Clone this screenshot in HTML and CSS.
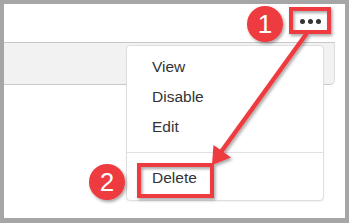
FILE: index.html
```html
<!DOCTYPE html>
<html>
<head>
<meta charset="utf-8">
<link rel="stylesheet" href="styles.css">
</head>
<body>
<div class="frame">
  <div class="canvas">
    <div class="topbar">
      <div class="dots"><span></span><span></span><span></span></div>
    </div>
    <div class="band"></div>
    <div class="menu">
      <div class="item">View</div>
      <div class="item">Disable</div>
      <div class="item">Edit</div>
      <div class="divider"></div>
      <div class="item">Delete</div>
    </div>
    <svg class="annot" width="349" height="223" viewBox="0 0 349 223">
      <defs>
        <filter id="sh" x="-20%" y="-20%" width="140%" height="140%">
          <feDropShadow dx="1.5" dy="2" stdDeviation="1.5" flood-color="#000" flood-opacity="0.35"/>
        </filter>
      </defs>
      <g filter="url(#sh)">
        <rect x="291" y="9" width="38" height="23" fill="none" stroke="#ee3a3f" stroke-width="4"/>
        <rect x="139" y="165" width="73" height="31" fill="none" stroke="#ee3a3f" stroke-width="4"/>
        <line x1="307" y1="33" x2="221" y2="152" stroke="#ee3a3f" stroke-width="4.5"/>
        <polygon points="212,165 213.5,145 231,157.5" fill="#ee3a3f"/>
        <circle cx="265" cy="24" r="18" fill="#ee3a3f"/>
        <circle cx="107" cy="182" r="18" fill="#ee3a3f"/>
      </g>
    </svg>
    <div class="num n1">1</div>
    <div class="num n2">2</div>
  </div>
</div>
</body>
</html>
```
FILE: styles.css
```css
html, body {
  margin: 0;
  padding: 0;
}
body {
  width: 349px;
  height: 223px;
  overflow: hidden;
  font-family: "Liberation Sans", Arial, sans-serif;
}
.frame {
  background: #a6a6a6;
  padding: 4px 4px 5px 4px;
  width: 349px;
  height: 223px;
  box-sizing: border-box;
}
.canvas {
  position: relative;
  background: #fff;
  height: 214px;
}
.topbar {
  height: 38px;
  width: 331px;
  display: flex;
  justify-content: flex-end;
  align-items: center;
  box-sizing: border-box;
  padding-right: 14px;
}
.dots {
  display: flex;
  gap: 3px;
  margin-top: -4px;
}
.dots span {
  width: 5px;
  height: 5px;
  border-radius: 50%;
  background: #333;
}
.band {
  width: 331px;
  background: #f2f2f2;
  border-top: 1px solid #c8c8c8;
  border-bottom: 1px solid #c8c8c8;
  border-right: 1px solid #dcdcdc;
  border-bottom-right-radius: 5px;
  box-sizing: border-box;
  height: 43px;
}
.menu {
  position: absolute;
  left: 122px;
  top: 41px;
  width: 198px;
  height: 156px;
  box-sizing: border-box;
  background: #fff;
  border: 1px solid #dedede;
  border-radius: 4px;
  padding: 6px 0 6px 0;
  box-shadow: 0 1px 2px rgba(0,0,0,0.05);
}
.item {
  font-size: 15.5px;
  line-height: 30px;
  color: #333;
  padding-left: 25px;
}
.divider {
  height: 1px;
  background: #e2e2e2;
  margin: 10px 0 10px 0;
}
.annot {
  position: absolute;
  left: -4px;
  top: -4px;
}
.num {
  position: absolute;
  width: 36px;
  height: 36px;
  line-height: 36px;
  text-align: center;
  color: #fff;
  font-size: 26px;
  font-family: "Liberation Sans", Arial, sans-serif;
}
.n1 { left: 243px; top: 2px; }
.n2 { left: 85px; top: 160px; }
```
